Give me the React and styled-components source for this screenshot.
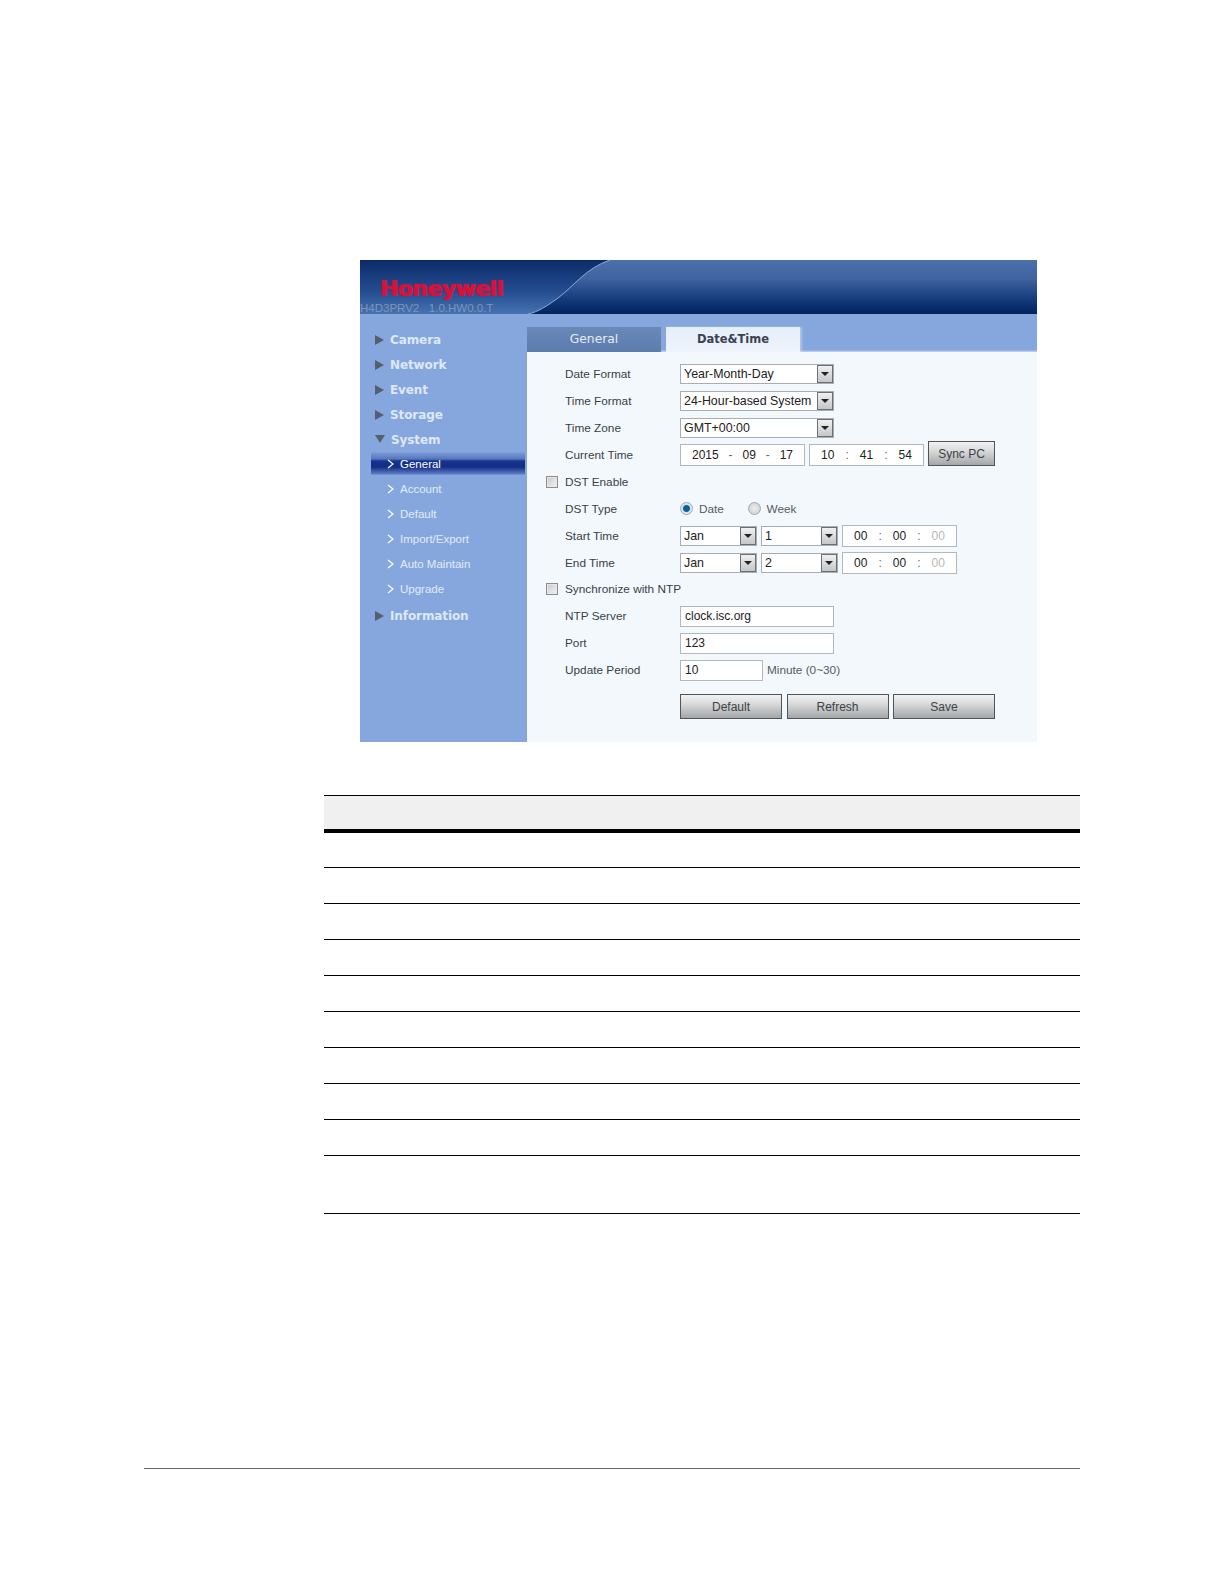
import React from 'react';
import styled, { createGlobalStyle } from 'styled-components';

const Global = createGlobalStyle`
  html, body { margin: 0; padding: 0; background: #fff; }
  body { font-family: "Liberation Sans", Arial, sans-serif; }
`;

const Page = styled.div`
  width: 1224px;
  height: 1584px;
  padding-top: 260px;
  box-sizing: border-box;
  display: flex;
  flex-direction: column;
`;

const Shot = styled.div`
  width: 677px;
  height: 482px;
  margin-left: 360px;
  display: flex;
  flex-direction: column;
  font-size: 11.8px;
  color: #333;
`;

const Header = styled.div`
  position: relative;
  height: 54px;
  flex: none;
  overflow: hidden;
  background: linear-gradient(#4d70ad, #3f62a0 35%, #12397a 75%, #02225e);
`;

const Swoosh = styled.svg`
  position: absolute;
  left: 0;
  top: 0;
`;

const Logo = styled.div`
  position: absolute;
  left: 20px;
  top: 16px;
  font: bold 22px/26px "DejaVu Sans", sans-serif;
  letter-spacing: -0.6px;
  color: #d6123a;
  text-shadow: 0 0 1px #d6123a, 0.5px 0 0 #d6123a;
`;

const Version = styled.div`
  position: absolute;
  left: 0;
  bottom: 0;
  font-size: 11.5px;
  line-height: 12px;
  color: #8095bb;
  white-space: pre;
`;

const Body = styled.div`
  flex: 1;
  display: flex;
`;

const Side = styled.div`
  width: 167px;
  flex: none;
  box-sizing: border-box;
  padding: 13.4px 2px 0 11px;
  background: #85a7de;
`;

const MenuItem = styled.div`
  height: 25.1px;
  display: flex;
  align-items: center;
  gap: 6px;
  padding-left: 4px;
  font: bold 12px "DejaVu Sans", sans-serif;
  letter-spacing: -0.1px;
  color: #dfe8f6;
`;

const Arrow = styled.span`
  width: 0;
  height: 0;
  border-style: solid;
  border-color: transparent;
  border-width: 5px 0 5px 9px;
  border-left-color: #555f70;
`;

const ArrowDown = styled.span`
  width: 0;
  height: 0;
  margin-bottom: 3px;
  border-style: solid;
  border-color: transparent;
  border-width: 8px 5px 0 5px;
  border-top-color: #555f70;
`;

const SubList = styled.div`
  margin: -1.5px 0 1.5px;
`;

const SubItem = styled.div`
  height: 25.1px;
  box-sizing: border-box;
  display: flex;
  align-items: center;
  gap: 6px;
  padding-left: 16px;
  font-size: 11.5px;
  color: ${(p) => (p.$active ? '#fff' : '#e3ebf8')};
  background: ${(p) =>
    p.$active
      ? 'linear-gradient(transparent 1px, #7a97d2 2px, #5577bd 8px, #16338f 10px, #142c88 16px, #5d7cc4 23px, transparent 24px)'
      : 'none'};
`;

const Main = styled.div`
  flex: 1;
  display: flex;
  flex-direction: column;
  background: #f3f8fd;
`;

const TabBar = styled.div`
  height: 38px;
  flex: none;
  box-sizing: border-box;
  padding-top: 13px;
  display: flex;
  gap: 5px;
  background: linear-gradient(#85a7de 94%, #c4d5ef);
`;

const Tab = styled.div`
  width: 134px;
  height: 25px;
  padding-bottom: 2px;
  box-sizing: border-box;
  display: flex;
  align-items: center;
  justify-content: center;
  font-family: "DejaVu Sans", sans-serif;
  font-size: ${(p) => (p.$active ? '11.5px' : '12.3px')};
  font-weight: ${(p) => (p.$active ? 'bold' : 'normal')};
  color: ${(p) => (p.$active ? '#3a4250' : '#e6ecf5')};
  background: ${(p) =>
    p.$active ? 'linear-gradient(#e6eefa, #eef4fc)' : 'linear-gradient(#6a89b9, #5b7cae)'};
  box-shadow: ${(p) => (p.$active ? '2px 0 2px rgba(255, 255, 255, 0.35)' : 'none')};
`;

const Form = styled.div`
  padding-top: 8.5px;
  display: flex;
  flex-direction: column;
`;

const Row = styled.div`
  height: 26.95px;
  display: flex;
  align-items: center;
`;

const CheckCell = styled.div`
  width: 38px;
  flex: none;
  display: flex;
  padding-left: 19px;
  box-sizing: border-box;
`;

const Check = styled.span`
  width: 10px;
  height: 10px;
  border: 1px solid #8d8d8d;
  background: linear-gradient(135deg, #c9c9c9, #f4f4f4);
  box-shadow: inset 0 0 0 1px #e8e8e8;
`;

const Label = styled.div`
  width: 115px;
  flex: none;
  white-space: nowrap;
  color: #3a3f47;
`;

const Controls = styled.div`
  display: flex;
  align-items: center;
  gap: 4px;
`;

const Select = styled.div`
  width: ${(p) => p.$w}px;
  height: 20px;
  box-sizing: border-box;
  display: flex;
  align-items: center;
  justify-content: space-between;
  border: 1px solid #a9adb2;
  background: #fff;
  padding-left: 3px;
  font-size: 12.4px;
  color: #222;
  white-space: nowrap;
`;

const SelectBtn = styled.span`
  width: 16px;
  height: 18px;
  flex: none;
  display: flex;
  align-items: center;
  justify-content: center;
  box-sizing: border-box;
  border: 1px solid #6a7075;
  background: linear-gradient(#f0f0f0, #c4c6c8);
  &::after {
    content: '';
    border-style: solid;
    border-color: #222 transparent transparent;
    border-width: 4px 4px 0;
  }
`;

const Field = styled.div`
  width: ${(p) => p.$w}px;
  height: 21px;
  box-sizing: border-box;
  display: flex;
  align-items: center;
  padding-left: 4px;
  border: 1px solid #b4b8bc;
  background: #fff;
  font-size: 12px;
  color: #222;
`;

const Segments = styled(Field)`
  height: 22px;
  padding: 0 11px;
  justify-content: space-between;
`;

const Seg = styled.span`
  color: ${(p) => (p.$dim ? '#b5b8bb' : '#222')};
`;

const Sep = styled.span`
  color: #666;
`;

const Gray = styled.span`
  color: #555b62;
`;

const Radio = styled.span`
  width: 11px;
  height: 11px;
  border-radius: 50%;
  border: 1px solid #a4a8ac;
  background: ${(p) =>
    p.$on ? 'radial-gradient(circle, #0d5f98 0 3px, #d9e6ee 4px)' : 'radial-gradient(circle, #eee, #c6c8ca)'};
`;

const RadioGroup = styled.div`
  display: flex;
  align-items: center;
  gap: 6px;
  width: 67.5px;
`;

const Button = styled.div`
  width: 102px;
  height: 25px;
  box-sizing: border-box;
  display: flex;
  align-items: center;
  justify-content: center;
  border: 1px solid #4e555b;
  background: linear-gradient(#f2f2f2, #dcdcdc 35%, #a4a6a8);
  font-size: 12px;
  color: #3c4147;
`;

const SyncButton = styled(Button)`
  width: 67px;
  margin-top: -2px;
`;

const Actions = styled.div`
  display: flex;
  gap: 4.5px;
  margin: 10.5px 0 0 153px;
`;

const Table = styled.div`
  width: 756px;
  margin: 53px 0 0 324px;
  border-top: 1px solid #000;
`;

const TableHead = styled.div`
  height: 33px;
  background: #f0f0f0;
  border-bottom: 4px solid #000;
`;

const TableRow = styled.div`
  height: ${(p) => p.$h || 35}px;
  border-bottom: 1px solid #000;
`;

const Footer = styled.div`
  width: 936px;
  height: 1px;
  margin: 254px 0 0 144px;
  background: #666;
`;

const Chevron = () => (
  <svg width="7" height="10" viewBox="0 0 7 10">
    <polyline points="1,1 6,5 1,9" fill="none" stroke="#fff" strokeWidth="1.2" />
  </svg>
);

const TimeBox = ({ w, parts, sep, dimLast }) => (
  <Segments $w={w}>
    <Seg>{parts[0]}</Seg>
    <Sep>{sep}</Sep>
    <Seg>{parts[1]}</Seg>
    <Sep>{sep}</Sep>
    <Seg $dim={dimLast}>{parts[2]}</Seg>
  </Segments>
);

const subItems = ['General', 'Account', 'Default', 'Import/Export', 'Auto Maintain', 'Upgrade'];
const tableRows = [34, 35, 35, 35, 35, 35, 35, 35, 35, 57];

export default function App() {
  return (
    <Page>
      <Global />
      <Shot>
        <Header>
          <Swoosh width="677" height="54" viewBox="0 0 677 54">
            <defs>
              <linearGradient id="leftFill" x1="0" y1="0" x2="0" y2="1">
                <stop offset="0" stopColor="#0c2a68" />
                <stop offset="0.6" stopColor="#254f92" />
                <stop offset="1" stopColor="#4673b0" />
              </linearGradient>
            </defs>
            <path d="M0 0H250C226 8 214 26 198 38C187 46 178 52 168 54H0Z" fill="url(#leftFill)" />
            <path d="M250 0C226 8 214 26 198 38C187 46 178 52 168 54" fill="none" stroke="#8ea9d0" strokeWidth="1" />
          </Swoosh>
          <Logo>Honeywell</Logo>
          <Version>H4D3PRV2   1.0.HW0.0.T</Version>
        </Header>
        <Body>
          <Side>
            {['Camera', 'Network', 'Event', 'Storage'].map((name) => (
              <MenuItem key={name}><Arrow />{name}</MenuItem>
            ))}
            <MenuItem><ArrowDown />System</MenuItem>
            <SubList>
              {subItems.map((name, i) => (
                <SubItem key={name} $active={i === 0}><Chevron />{name}</SubItem>
              ))}
            </SubList>
            <MenuItem><Arrow />Information</MenuItem>
          </Side>
          <Main>
            <TabBar>
              <Tab>General</Tab>
              <Tab $active>Date&amp;Time</Tab>
            </TabBar>
            <Form>
              <Row>
                <CheckCell /><Label>Date Format</Label>
                <Select $w={154}>Year-Month-Day<SelectBtn /></Select>
              </Row>
              <Row>
                <CheckCell /><Label>Time Format</Label>
                <Select $w={154}>24-Hour-based System<SelectBtn /></Select>
              </Row>
              <Row>
                <CheckCell /><Label>Time Zone</Label>
                <Select $w={154}>GMT+00:00<SelectBtn /></Select>
              </Row>
              <Row>
                <CheckCell /><Label>Current Time</Label>
                <Controls>
                  <TimeBox w={125} parts={['2015', '09', '17']} sep="-" />
                  <TimeBox w={115} parts={['10', '41', '54']} sep=":" />
                  <SyncButton>Sync PC</SyncButton>
                </Controls>
              </Row>
              <Row>
                <CheckCell><Check /></CheckCell><Label>DST Enable</Label>
              </Row>
              <Row>
                <CheckCell /><Label>DST Type</Label>
                <RadioGroup><Radio $on /><Gray>Date</Gray></RadioGroup>
                <RadioGroup><Radio /><Gray>Week</Gray></RadioGroup>
              </Row>
              <Row>
                <CheckCell /><Label>Start Time</Label>
                <Controls>
                  <Select $w={77}>Jan<SelectBtn /></Select>
                  <Select $w={77}>1<SelectBtn /></Select>
                  <TimeBox w={115} parts={['00', '00', '00']} sep=":" dimLast />
                </Controls>
              </Row>
              <Row>
                <CheckCell /><Label>End Time</Label>
                <Controls>
                  <Select $w={77}>Jan<SelectBtn /></Select>
                  <Select $w={77}>2<SelectBtn /></Select>
                  <TimeBox w={115} parts={['00', '00', '00']} sep=":" dimLast />
                </Controls>
              </Row>
              <Row>
                <CheckCell><Check /></CheckCell><Label>Synchronize with NTP</Label>
              </Row>
              <Row>
                <CheckCell /><Label>NTP Server</Label>
                <Field $w={154}>clock.isc.org</Field>
              </Row>
              <Row>
                <CheckCell /><Label>Port</Label>
                <Field $w={154}>123</Field>
              </Row>
              <Row>
                <CheckCell /><Label>Update Period</Label>
                <Controls>
                  <Field $w={83}>10</Field>
                  <Gray>Minute (0~30)</Gray>
                </Controls>
              </Row>
              <Actions>
                <Button>Default</Button>
                <Button>Refresh</Button>
                <Button>Save</Button>
              </Actions>
            </Form>
          </Main>
        </Body>
      </Shot>
      <Table>
        <TableHead />
        {tableRows.map((h, i) => (
          <TableRow key={i} $h={h} />
        ))}
      </Table>
      <Footer />
    </Page>
  );
}
